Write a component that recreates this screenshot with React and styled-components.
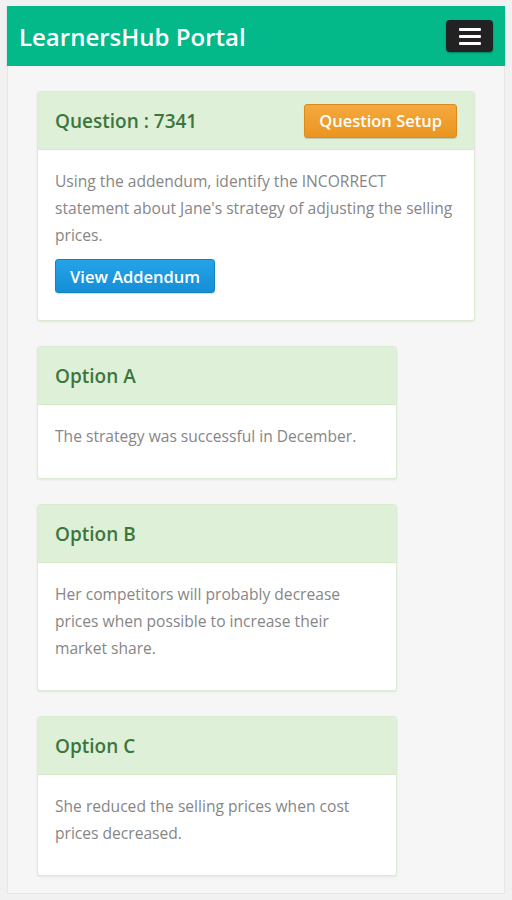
import React from 'react'
import styled, { createGlobalStyle } from 'styled-components'

const GlobalStyle = createGlobalStyle`
  html, body {
    margin: 0;
    padding: 0;
    background: #f1f1f1;
    font-family: "Open Sans", "Liberation Sans", sans-serif;
  }
  * { box-sizing: border-box; }
`;

const Page = styled.div`
  padding: 6px 7px 6px 7px;
`;

const Navbar = styled.header`
  height: 60px;
  background: #03b98a;
  display: flex;
  align-items: center;
  justify-content: space-between;
  padding: 0 12px 0 12px;
  box-shadow: 0 1px 2px rgba(0, 0, 0, 0.15);
`;

const Brand = styled.h1`
  margin: 0;
  color: #ffffff;
  font-size: 24px;
  font-weight: 600;
`;

const Toggle = styled.button`
  width: 47px;
  height: 32px;
  border: none;
  border-radius: 4px;
  background: #222222;
  display: flex;
  flex-direction: column;
  align-items: center;
  justify-content: center;
  gap: 4px;
  padding: 0;
  box-shadow: 0 1px 2px rgba(0, 0, 0, 0.3);

  span {
    display: block;
    width: 22px;
    height: 3px;
    border-radius: 1px;
    background: #ffffff;
  }
`;

const Content = styled.main`
  background: #f6f6f6;
  border: 1px solid #e6e6e6;
  border-top: none;
  padding: 25px 29px 17px 29px;
  display: flex;
  flex-direction: column;
  align-items: flex-start;
  gap: 25px;
`;

const Panel = styled.section`
  width: ${p => (p.$wide ? '100%' : '360px')};
  background: #ffffff;
  border: 1px solid #dcebd3;
  border-radius: 3px;
  box-shadow: 0 1px 2px rgba(0, 0, 0, 0.08);
  overflow: hidden;
`;

const PanelHeading = styled.div`
  height: 58px;
  background: #dff0d8;
  border-bottom: 1px solid #d6e9c6;
  display: flex;
  align-items: center;
  justify-content: space-between;
  padding: 0 17px 0 17px;
`;

const PanelTitle = styled.h3`
  margin: 0;
  color: #3c763d;
  font-size: 19px;
  font-weight: 600;
`;

const PanelBody = styled.div`
  padding: 18px 17px ${p => (p.$extra ? '27px' : '18px')} 17px;
`;

const Text = styled.p`
  margin: 0 0 10px 0;
  color: #868686;
  font-size: 15.6px;
  line-height: 27px;
`;

const Button = styled.button`
  height: 34px;
  padding: 0 14px;
  border-radius: 3px;
  font-family: "Open Sans", "Liberation Sans", sans-serif;
  font-size: 16.5px;
  font-weight: 600;
  color: #ffffff;
  cursor: pointer;
  border: 1px solid ${p => (p.$variant === 'warning' ? '#d98c1d' : '#1483c4')};
  background: ${p =>
    p.$variant === 'warning'
      ? 'linear-gradient(#f5a93d, #ea9520)'
      : 'linear-gradient(#25a3e8, #158ed6)'};
  box-shadow: 0 1px 1px rgba(0, 0, 0, 0.15);
`;

const options = [
  { label: 'Option A', text: 'The strategy was successful in December.' },
  {
    label: 'Option B',
    text: 'Her competitors will probably decrease prices when possible to increase their market share.',
  },
  { label: 'Option C', text: 'She reduced the selling prices when cost prices decreased.' },
];

export default function App() {
  return (
    <Page>
      <GlobalStyle />
      <Navbar>
        <Brand>LearnersHub Portal</Brand>
        <Toggle aria-label="menu">
          <span />
          <span />
          <span />
        </Toggle>
      </Navbar>
      <Content>
        <Panel $wide>
          <PanelHeading>
            <PanelTitle>Question : 7341</PanelTitle>
            <Button $variant="warning">Question Setup</Button>
          </PanelHeading>
          <PanelBody $extra>
            <Text>
              Using the addendum, identify the INCORRECT statement about Jane's strategy of adjusting the
              selling prices.
            </Text>
            <Button>View Addendum</Button>
          </PanelBody>
        </Panel>
        {options.map(o => (
          <Panel key={o.label}>
            <PanelHeading>
              <PanelTitle>{o.label}</PanelTitle>
            </PanelHeading>
            <PanelBody>
              <Text>{o.text}</Text>
            </PanelBody>
          </Panel>
        ))}
      </Content>
    </Page>
  )
}
